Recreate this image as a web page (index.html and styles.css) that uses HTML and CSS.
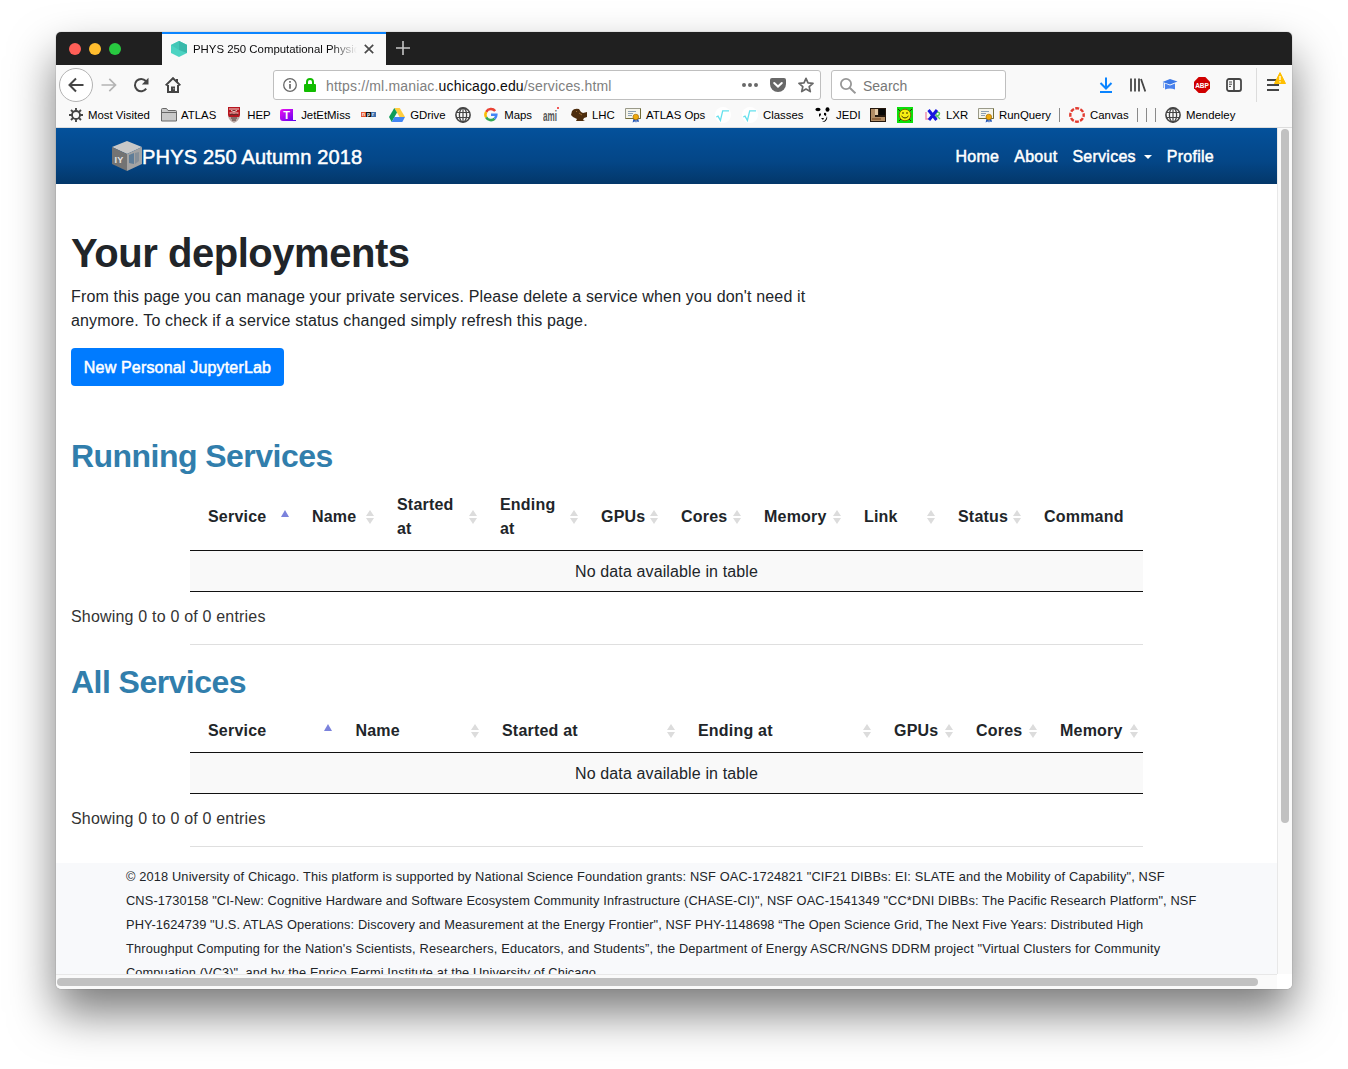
FILE: index.html
```html
<!DOCTYPE html>
<html lang="en">
<head>
<meta charset="utf-8">
<title>PHYS 250 Computational Physics</title>
<link rel="stylesheet" href="styles.css">
</head>
<body>
<svg class="defs" width="0" height="0" aria-hidden="true">
  <symbol id="globe" viewBox="0 0 16 16"><g fill="none" stroke="#454545" stroke-width="1.3"><circle cx="8" cy="8" r="7.1" stroke-width="1.6"/><ellipse cx="8" cy="8" rx="3.6" ry="7"/><path d="M8 1v14M1.500 5.500h13M1.500 10.500h13" stroke-width="1.2"/></g></symbol>
  <symbol id="cert" viewBox="0 0 16 16"><path d="M.5 1.5h15v10H.5z" fill="#f5f4ea" stroke="#9a9a8a"/><path d="M15.5 1.5v10H.5" fill="none" stroke="#716c35"/><path d="M3 4.5h8M3 6.5h5M3 8.5h4" stroke="#8ba0b5"/><path d="M8.600 11l-1 4.500 2-1 1 1 .4-4M11 11l.5 4.500 1-1 1.500.6-1-4.500" fill="#2859b8"/><circle cx="10.800" cy="10" r="2.800" fill="#efaa0c" stroke="#a66b00" stroke-width=".7"/></symbol>
  <symbol id="root" viewBox="0 0 16 16"><circle cx="8" cy="8" r="8" fill="#fff"/><path d="M1.300 10l1.700-.8 2.400 4.200L7.700 3.800H14" fill="none" stroke="#65e1ed" stroke-width="1.300"/></symbol>
  <symbol id="sort" viewBox="0 0 8 14"><path d="M4 0l4 6H0zM0 8h8L4 14z" fill="#dcdcdc"/></symbol>
  <symbol id="asc" viewBox="0 0 8 14"><path d="M4 0l4 7H0z" fill="#7b82dc"/></symbol>
</svg>
<div class="window">
  <header class="tabbar">
    <div class="lights"><i class="red"></i><i class="amber"></i><i class="green"></i></div>
    <div class="tab">
      <svg class="i16" viewBox="0 0 16 16"><path d="M8 0l8 4v8l-8 4-8-4V4z" fill="#4cd3c2"/><path d="M8 0l8 4-8 5-8-5z" fill="#42c7b7"/><path d="M8 0l8 4v8L8 9z" fill="#38b8aa"/></svg>
      <span class="tab-title">PHYS 250 Computational Physics</span>
      <svg class="close" viewBox="0 0 10 10"><path d="M.8.8l8.4 8.4M9.2.8L.8 9.2" stroke="#4a4a4a" stroke-width="1.7"/></svg>
    </div>
    <svg class="plus" viewBox="0 0 14 14"><path d="M7 0v14M0 7h14" stroke="#c6c6c6" stroke-width="1.6"/></svg>
  </header>
  <div class="toolbar">
    <span class="back"><svg class="i16" viewBox="0 0 16 16"><path d="M15.5 8H1.5M8 1.5L1.5 8 8 14.5" fill="none" stroke="#454545" stroke-width="2"/></svg></span>
    <svg class="i16" viewBox="0 0 16 16"><path d="M.5 8h14M8.3 1.8L14.5 8l-6.2 6.2" fill="none" stroke="#b4b4b4" stroke-width="1.7"/></svg>
    <svg class="i16" viewBox="0 0 16 16"><path d="M13.2 11.7A6.2 6.2 0 1 1 12.8 4" fill="none" stroke="#454545" stroke-width="2"/><path d="M15.5.8v6.7H8.8z" fill="#454545"/></svg>
    <svg class="i16" viewBox="0 0 16 16"><path d="M.7 8.4L8 1.2l7.3 7.2" fill="none" stroke="#454545" stroke-width="2"/><path d="M3 8v7h10V8M12 2v3" fill="none" stroke="#454545" stroke-width="2"/><path d="M6 15V9.5h4V15z" fill="#454545"/><path d="M8.4 11.8h.9" stroke="#fff"/></svg>
    <div class="urlbox">
      <svg class="info" viewBox="0 0 14 14"><circle cx="7" cy="7" r="6.3" fill="none" stroke="#686868" stroke-width="1.3"/><path d="M7 6v4.8M7 3v1.7" stroke="#686868" stroke-width="1.7"/></svg>
      <svg class="lock" viewBox="0 0 12 14"><path d="M3 7V4a3 3 0 0 1 6 0v3" fill="none" stroke="#12bc00" stroke-width="2"/><rect y="6" width="12" height="8" rx="1" fill="#12bc00"/></svg>
      <span class="url">https://ml.maniac.<b>uchicago.edu</b>/services.html</span>
      <svg class="dots" viewBox="0 0 16 16"><path d="M0 8a2 2 0 1 0 4 0 2 2 0 1 0-4 0M6 8a2 2 0 1 0 4 0 2 2 0 1 0-4 0M12 8a2 2 0 1 0 4 0 2 2 0 1 0-4 0" fill="#686868"/></svg>
      <svg class="i16" viewBox="0 0 16 16"><path d="M2 1h12q2 0 2 2v4a8 8 0 0 1-16 0V3q0-2 2-2z" fill="#686868"/><path d="M4.2 6L8 9.6 11.8 6" fill="none" stroke="#fff" stroke-width="2" stroke-linecap="round"/></svg>
      <svg class="i16" viewBox="0 0 16 16"><path d="M8 1.4l2 4.5 5 .5-3.8 3.3 1.1 4.9L8 12.1l-4.3 2.5 1.1-4.9L1 6.4l5-.5z" fill="none" stroke="#686868" stroke-width="1.7" stroke-linejoin="round"/></svg>
    </div>
    <div class="searchbox">
      <svg class="i16" viewBox="0 0 16 16"><circle cx="6" cy="6" r="5.1" fill="none" stroke="#979797" stroke-width="1.8"/><path d="M9.7 9.7l5.8 5.6" stroke="#979797" stroke-width="2"/></svg>
      <span>Search</span>
    </div>
    <svg class="i16" viewBox="0 0 16 16"><path d="M8 .5v11M2.5 6L8 11.5 13.5 6M2 15h12" fill="none" stroke="#0a84ff" stroke-width="2"/></svg>
    <svg class="i16" viewBox="0 0 16 16"><path d="M1 1.5v13M5 1.5v13M9 1.5v13M11 2l4.3 12.5" stroke="#454545" stroke-width="1.8"/></svg>
    <svg class="i16" viewBox="0 0 16 16"><path d="M.5 5L8 2l7.5 2.5L8 7.5z" fill="#3b78e7"/><path d="M3 6.500l5 2 5-2v6q-5-2-10 0z" fill="#4a82ed"/><path d="M1.6 5.5V11" stroke="#86abed"/></svg>
    <svg class="i16" viewBox="0 0 16 16"><path d="M4.7 0h6.6L16 4.7v6.6L11.3 16H4.7L0 11.3V4.7z" fill="#d00000"/><text x="8" y="10.5" text-anchor="middle" class="abp">ABP</text></svg>
    <svg class="i16" viewBox="0 0 16 16"><rect x="1" y="2" width="14" height="12" rx="2" fill="none" stroke="#454545" stroke-width="1.8"/><path d="M8 2v12" stroke="#454545" stroke-width="1.6"/><path d="M3 5h3M3 7.2h3M3 9.4h2" stroke="#454545"/></svg>
    <i class="divider"></i>
    <span class="menu"><svg class="i16" viewBox="0 0 16 16"><path d="M2 3h12M2 8h12M2 13h12" stroke="#454545" stroke-width="1.8"/></svg><svg class="warn" viewBox="0 0 12 12"><path d="M6 .6L11.5 11.5H.5z" fill="#ffbf00" stroke="#ffbf00" stroke-linejoin="round"/><path d="M6 4v4M6 9.2v1.3" stroke="#fff" stroke-width="1.3"/></svg></span>
  </div>
  <nav class="bookmarks">
    <a><svg class="i16" viewBox="0 0 16 16"><circle cx="8" cy="8" r="4" fill="none" stroke="#454545" stroke-width="1.8"/><path d="M8 1v3M8 12v3M1 8h3M12 8h3M3 3l2.2 2.2M10.8 10.8L13 13M3 13l2.2-2.2M10.8 5.2L13 3" stroke="#454545" stroke-width="1.9"/></svg>Most Visited</a>
    <a><svg class="i16" viewBox="0 0 16 16"><path d="M.5 14V2.5Q.5 1.500 1.500 1.500h4l1.500 2h7.500q1 0 1 1V14z" fill="#c9c9c9" stroke="#686868"/><path d="M.5 5.500h15" stroke="#686868"/></svg>ATLAS</a>
    <a><svg class="i16" viewBox="0 0 16 16"><path d="M2 0h12v9q-1 5-6 7-5-2-6-7z" fill="#b9a9a5"/><path d="M2 0h12v8l-1 2H3L2 8z" fill="#b71620"/><path d="M3 2h10M5 3.500l3 1 3-1M3.500 6h9" stroke="#f2d9d2"/><path d="M4 8l2-1 2 1 2-1 2 1M5 11h6M6 13h4" stroke="#4e302f" fill="none"/></svg>&nbsp;HEP</a>
    <a><svg class="i16" viewBox="0 0 16 16"><defs><linearGradient id="jet" x2="1" y2="1"><stop stop-color="#f010f0"/><stop offset="1" stop-color="#5a00ef"/></linearGradient></defs><path d="M3 2h10v11h3v1H3q-3 0-3-3V5q0-3 3-3z" fill="url(#jet)"/><text x="6.500" y="12" text-anchor="middle" class="jet">T</text></svg>&nbsp;JetEtMiss</a>
    <a><svg class="i16" viewBox="0 0 16 16"><path d="M0 5h5v5H0z" fill="#e4552c"/><path d="M5 5h5v5H5z" fill="#111"/><path d="M10 5h5v5h-5z" fill="#3e6fae"/><text x="1" y="9" class="npr">n</text><text x="6" y="9" class="npr">p</text><text x="11" y="9" class="npr">r</text></svg></a>
    <a><svg class="i16" viewBox="0 0 16 16"><path d="M5.300 1h5.400L16 10h-5.400z" fill="#ffcd40"/><path d="M5.300 1L8 5.600 2.700 15 0 10z" fill="#0f9d58"/><path d="M5.400 10H16l-2.700 5H2.700z" fill="#4285f4"/></svg>&nbsp;GDrive</a>
    <a><svg class="i16"><use href="#globe"/></svg></a>
    <a><svg class="i16" viewBox="0 0 16 16"><g fill="none" stroke-width="2.600"><path d="M3.200 4.800a5.500 5.500 0 0 1 9-.8" stroke="#ea4335"/><path d="M3.200 4.800a5.500 5.500 0 0 0 0 5.500" stroke="#fbbc05"/><path d="M3.200 10.300a5.500 5.500 0 0 0 8.400 1.500" stroke="#34a853"/><path d="M11.600 11.800a5.500 5.500 0 0 0 1.700-4H8" stroke="#4285f4"/></g></svg>&nbsp;Maps</a>
    <a><svg class="i16" viewBox="0 0 16 16"><g transform="scale(.68 1.25)"><text x="0" y="11.600" class="ami">ami</text></g><circle cx="15" cy="1" r="1" fill="#e22"/></svg></a>
    <a><svg class="i16" viewBox="0 0 16 16"><path d="M1 4q2-3 7-2l2 3 2 1 4-1v5l-3 1-1 2 2 1H5l1-2-4-2-2-2z" fill="#4d2d0e"/><path d="M5 4l1 1M8 6l3 2" stroke="#9a6a32"/></svg>LHC</a>
    <a><svg class="i16"><use href="#cert"/></svg>ATLAS Ops</a>
    <a><svg class="i16"><use href="#root"/></svg></a>
    <a><svg class="i16"><use href="#root"/></svg>Classes</a>
    <a><svg class="i16" viewBox="0 0 16 16"><ellipse cx="3" cy="2.500" rx="2.600" ry="1.800"/><ellipse cx="12.500" cy="2.500" rx="2" ry="2.200"/><path d="M4 7q2-2 2 1l-2 2zM9 6q3-1 2 3l-2-1zM6 11h3l-1 2zM12 9q1 4-3 6h-2q4-1 5-6z"/></svg>JEDI</a>
    <a><svg class="i16" viewBox="0 0 16 16"><path d="M0 1h16v14H0z" fill="#25180e"/><path d="M1 2h4v8h10v4H1z" fill="#b18c65"/><path d="M5 2h3v6H5z" fill="#e3c9a6"/><path d="M9 2h6v6H9z" fill="#080808"/><path d="M2 12h9" stroke="#6e3e19"/></svg></a>
    <a><svg class="i16" viewBox="0 0 16 16"><path d="M0 0h16v16H0z" fill="#0be00b"/><circle cx="8" cy="8" r="5.800" fill="#f6ee13" stroke="#826a00"/><path d="M6 5v2M10 5v2M4.500 9q3.500 4 7 0M1 2l2 2M15 2l-2 2M2 14l2-2M14 14l-2-2" fill="none" stroke="#342b00"/></svg></a>
    <a><svg class="i16" viewBox="0 0 16 16"><path d="M1 5v7h4" fill="none" stroke="#f08caa" stroke-width="1.400"/><path d="M11 12V5q5 0 3 3l-2 1 3 3" fill="none" stroke="#58cd64" stroke-width="1.400"/><path d="M3.500 3l8 10M12 3l-8 10" stroke="#1717df" stroke-width="3"/></svg>LXR</a>
    <a><svg class="i16"><use href="#cert"/></svg>RunQuery</a>
    <i></i>
    <a><svg class="i16" viewBox="0 0 16 16"><circle cx="8" cy="8" r="6.700" fill="none" stroke="#e23b30" stroke-width="2.400" stroke-dasharray="3.900 1.360" stroke-dashoffset="1.950"/></svg>Canvas</a>
    <i></i><i></i><i></i>
    <a><svg class="i16"><use href="#globe"/></svg>Mendeley</a>
  </nav>
  <div class="viewport">
    <main class="page">
      <div class="navbar">
        <div class="brand"><svg class="cube" viewBox="0 0 30 30"><path d="M15 0l15 6-15 7L0 6z" fill="#c8c8c8"/><path d="M0 6l15 7v17L0 23z" fill="#737373"/><path d="M15 13l15-7v17l-15 7z" fill="#a3a3a3"/><path d="M17 14l5-2v11l-5-1z" fill="#5f7d98"/><path d="M23 12l4-1v9l-4 3z" fill="#858f99"/><text x="2.500" y="22" class="cube-text">IY</text></svg>PHYS 250 Autumn 2018</div>
        <div class="links"><a>Home</a><a>About</a><a class="drop">Services</a><a>Profile</a></div>
      </div>
      <section class="intro">
        <h1>Your deployments</h1>
        <p>From this page you can manage your private services. Please delete a service when you don't need it<br>anymore. To check if a service status changed simply refresh this page.</p>
        <button>New Personal JupyterLab</button>
      </section>
      <section class="services running">
        <h2>Running Services</h2>
        <div class="table">
          <div class="head">
            <div>Service<svg><use href="#asc"/></svg></div><div>Name<svg><use href="#sort"/></svg></div><div>Started<br>at<svg><use href="#sort"/></svg></div><div>Ending<br>at<svg><use href="#sort"/></svg></div><div>GPUs<svg><use href="#sort"/></svg></div><div>Cores<svg><use href="#sort"/></svg></div><div>Memory<svg><use href="#sort"/></svg></div><div>Link<svg><use href="#sort"/></svg></div><div>Status<svg><use href="#sort"/></svg></div><div>Command</div>
          </div>
          <div class="empty">No data available in table</div>
        </div>
        <div class="count">Showing 0 to 0 of 0 entries</div>
        <hr>
      </section>
      <section class="services all">
        <h2>All Services</h2>
        <div class="table">
          <div class="head">
            <div>Service<svg><use href="#asc"/></svg></div><div>Name<svg><use href="#sort"/></svg></div><div>Started at<svg><use href="#sort"/></svg></div><div>Ending at<svg><use href="#sort"/></svg></div><div>GPUs<svg><use href="#sort"/></svg></div><div>Cores<svg><use href="#sort"/></svg></div><div>Memory<svg><use href="#sort"/></svg></div>
          </div>
          <div class="empty">No data available in table</div>
        </div>
        <div class="count">Showing 0 to 0 of 0 entries</div>
        <hr>
      </section>
      <footer><div>© 2018 University of Chicago. This platform is supported by National Science Foundation grants: NSF OAC-1724821 "CIF21 DIBBs: EI: SLATE and the Mobility of Capability", NSF</div><div class="l2">CNS-1730158 "CI-New: Cognitive Hardware and Software Ecosystem Community Infrastructure (CHASE-CI)", NSF OAC-1541349 "CC*DNI DIBBs: The Pacific Research Platform", NSF</div><div class="l3">PHY-1624739 "U.S. ATLAS Operations: Discovery and Measurement at the Energy Frontier", NSF PHY-1148698 “The Open Science Grid, The Next Five Years: Distributed High</div><div class="l4">Throughput Computing for the Nation's Scientists, Researchers, Educators, and Students”, the Department of Energy ASCR/NGNS DDRM project "Virtual Clusters for Community</div><div class="l5">Compuation (VC3)", and by the Enrico Fermi Institute at the University of Chicago.</div></footer>
    </main>
    <div class="vscroll"><i></i></div>
    <div class="hscroll"><i></i></div>
    <div class="corner"></div>
  </div>
</div>
</body>
</html>
```
FILE: styles.css
```css
* { box-sizing: border-box; }
html { height: 1069px; overflow: hidden; background: #fff; }
body {
  margin: 0;
  padding: 32px 56px 0;
  height: 1069px;
  overflow: hidden;
  font: 16px/24px "Liberation Sans", Arial, sans-serif;
  letter-spacing: .13px;
  color: #212529;
}
svg { display: block; flex: none; }
.defs { position: absolute; }
.i16 { width: 16px; height: 16px; }

.window {
  width: 1236px;
  height: 957px;
  border-radius: 5px;
  overflow: hidden;
  background: #f9f9f9;
  box-shadow: 0 0 1px rgba(0,0,0,.55), 0 24px 46px rgba(0,0,0,.52);
}

/* tab strip */
.tabbar { display: flex; height: 33px; background: #202020; }
.lights { display: flex; gap: 8px; width: 106px; padding: 11px 0 0 13px; }
.lights i { width: 12px; height: 12px; border-radius: 50%; }
.lights .red { background: #ff5f57; }
.lights .amber { background: #ffbd2e; }
.lights .green { background: #28c940; }
.tab {
  display: flex;
  align-items: center;
  width: 224px;
  padding: 0 0 1px 9px;
  border-top: 2px solid #0a84ff;
  background: #f9f9f9;
}
.tab-title {
  width: 164px;
  margin-left: 6px;
  overflow: hidden;
  white-space: nowrap;
  font-size: 11.4px;
  letter-spacing: 0;
  color: #0c0c0d;
  -webkit-mask-image: linear-gradient(90deg, #000 138px, transparent 164px);
  mask-image: linear-gradient(90deg, #000 138px, transparent 164px);
}
.close { width: 10px; height: 10px; margin-left: 7px; }
.plus { width: 14px; height: 14px; margin: 9px 0 0 10px; }

/* navigation toolbar */
.toolbar {
  display: grid;
  grid-template-columns: 42px 32px 32px 108px 558px 267px 32px 32px 32px 32px 27px 12px 30px;
  align-items: center;
  height: 40px;
  padding-left: 3px;
}
.back {
  display: grid;
  place-items: center;
  width: 34px;
  height: 34px;
  border: 1px solid #b3b3b3;
  border-radius: 50%;
  background: #fff;
}
.urlbox, .searchbox {
  display: flex;
  align-items: center;
  height: 30px;
  padding-top: 1px;
  border: 1px solid #bfbfbf;
  border-radius: 3px;
  background: #fff;
  font-size: 14px;
  letter-spacing: 0;
}
.urlbox { width: 548px; padding: 0 6px 0 9px; }
.info { width: 14px; height: 14px; }
.lock { width: 12px; height: 14px; margin-left: 7px; }
.url { flex: 1; margin-left: 10px; padding-top: 2px; letter-spacing: .16px; color: #808080; }
.url b { font-weight: 400; color: #0c0c0d; }
.dots { width: 16px; height: 16px; margin-right: 12px; }
.urlbox .dots + .i16 { margin-right: 12px; }
.searchbox { width: 175px; padding-left: 8px; gap: 7px; color: #777; }
.divider { width: 1px; height: 34px; background: #dcdcdc; margin-left: 3px; }
.menu { position: relative; }
.warn { position: absolute; left: 9px; top: -5px; width: 12px; height: 12px; }
.abp { font: bold 6.5px "Liberation Sans", sans-serif; fill: #fff; letter-spacing: 0; }

/* bookmarks */
.bookmarks {
  display: grid;
  grid-template-columns: 93px 65px 54px 81px 28px 66px 28px 60px 28px 54px 90px 27px 73px 55px 27px 28px 53px 80px 11px 67px 9px 9px 11px 80px;
  align-items: center;
  height: 23px;
  padding: 0 0 2px 12px;
  border-bottom: 1px solid #ddd;
  font-size: 11.4px;
  letter-spacing: 0;
  color: #000;
}
.bookmarks a { display: flex; align-items: center; gap: 4px; white-space: nowrap; height: 20px; }
.bookmarks a:nth-child(n+9) { gap: 5px; }
.bookmarks a:nth-child(3), .bookmarks a:nth-child(4), .bookmarks a:nth-child(6), .bookmarks a:nth-child(8) { gap: 2px; }
.bookmarks > i { width: 1px; height: 14px; margin-left: 1px; background: #8a8a8a; }
.jet { font: bold 11px "Liberation Sans", sans-serif; fill: #fff; }
.npr { font: bold 5px "Liberation Sans", sans-serif; fill: #fff; }
.ami { font: bold 12px "Liberation Sans", sans-serif; fill: #555; }

/* page viewport and scrollbars */
.viewport {
  display: grid;
  grid-template-columns: 1221px 15px;
  grid-template-rows: 846px 15px;
}
.page { overflow: hidden; background: #fff; }
.vscroll { padding: 1px 0 0 3px; border-left: 1px solid #e8e8e8; background: #fafafa; }
.vscroll i { display: block; width: 8px; height: 694px; border-radius: 4px; background: #c1c1c1; }
.hscroll { padding: 3px 0 0 1px; border-top: 1px solid #e8e8e8; background: #fafafa; }
.hscroll i { display: block; width: 1201px; height: 8px; border-radius: 4px; background: #c1c1c1; }
.corner { background: #fff; }

.navbar {
  display: flex;
  justify-content: space-between;
  align-items: center;
  height: 56px;
  padding: 1px 63px 0 56px;
  background: linear-gradient(#04519b, #044687 60%, #033769);
  color: #fff;
  -webkit-text-stroke: .5px #fff;
}
.brand { display: flex; align-items: center; font-size: 20px; letter-spacing: .18px; }
.cube { width: 30px; height: 30px; margin-top: -1px; }
.cube-text { font: bold 9px "Liberation Sans", sans-serif; fill: #e6e6e6; stroke: none; -webkit-text-stroke: 0; }
.links { display: flex; gap: 15px; letter-spacing: .26px; }
.drop { display: flex; align-items: center; }
.drop::after { content: ""; margin-left: 8px; border: 4px solid transparent; border-top-color: #fff; border-bottom: 0; }

.intro { padding: 45px 15px 0; white-space: nowrap; }
h1 { margin: 0 0 8px; font-size: 40px; line-height: 48px; letter-spacing: -.46px; }
p { margin: 0 0 15px; letter-spacing: .155px; }
button {
  display: block;
  width: 213px;
  height: 38px;
  padding: 2px 0 0;
  border: 0;
  border-radius: 4px;
  background: #007bff;
  color: #fff;
  font: inherit;
  letter-spacing: .18px;
  -webkit-text-stroke: .5px #fff;
}

.services h2 { margin: 0 0 0 15px; font-size: 32px; line-height: 38px; letter-spacing: -.54px; color: #317eac; }
.running { padding-top: 51px; }
.all { padding-top: 18px; }
.table { width: 953px; margin-left: 134px; }
.head { display: grid; border-bottom: 1px solid #111; font-weight: 700; letter-spacing: .2px; }
.head div { position: relative; align-self: center; padding-left: 18px; white-space: nowrap; }
.head svg { position: absolute; right: 5.500px; top: calc(50% - 7px); width: 8px; height: 14px; }
.running .head { grid-template-columns: 104px 85px 103px 101px 80px 83px 100px 94px 86px 117px; height: 76px; padding-top: 8px; }
.all .head { grid-template-columns: 147.500px 146.500px 196px 196px 82px 84px 101px; height: 52px; padding-top: 9px; }
.empty { height: 41px; padding-top: 9px; border-bottom: 1px solid #111; background: #f9f9f9; text-align: center; }
.count { margin: 13px 0 0 15px; letter-spacing: .19px; color: #333; }
.services hr { width: 953px; height: 1px; margin: 15px 0 0 134px; border: 0; background: #dfdfdf; }

footer {
  height: 130px;
  margin-top: 16px;
  padding: 2px 0 0 70px;
  background: #f8f9fb;
  font-size: 12.8px;
  line-height: 24px;
  letter-spacing: .14px;
  white-space: nowrap;
}
footer .l2 { letter-spacing: .123px; }
footer .l3 { letter-spacing: .112px; }
footer .l4 { letter-spacing: .16px; }
footer .l5 { letter-spacing: .1px; }
```
